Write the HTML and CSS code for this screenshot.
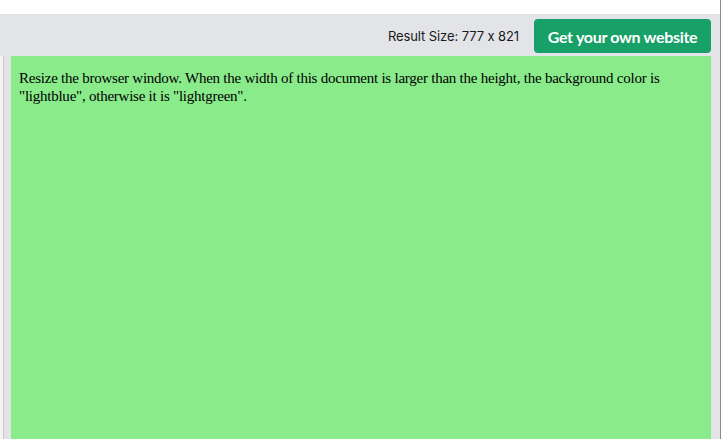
FILE: index.html
```html
<!DOCTYPE html>
<html>
<head>
<meta charset="utf-8">
<link rel="stylesheet" href="styles.css">
</head>
<body>
<div class="page">
  <div class="topbar"></div>
  <div class="main">
    <div class="header">
      <span class="result-size">Result Size: 777 x 821</span>
      <a class="cta">Get your own website</a>
    </div>
    <div class="content">
      <div class="edge"></div>
      <div class="frame">
        <p class="demo-text">Resize the browser window. When the width of this document is larger than the height, the background color is "lightblue", otherwise it is "lightgreen".</p>
      </div>
    </div>
  </div>
</div>
</body>
</html>
```
FILE: styles.css
```css
html, body {
  margin: 0;
  padding: 0;
  background: #ffffff;
}
.page {
  width: 720px;
  height: 439px;
  display: flex;
  flex-direction: column;
  border-right: 1px solid #8a8a8a;
  overflow: hidden;
}
.topbar {
  height: 14px;
  flex: none;
  background: #ffffff;
}
.main {
  flex: 1;
  background: #e3e4e8;
  display: flex;
  flex-direction: column;
  min-height: 0;
}
.header {
  flex: none;
  display: flex;
  justify-content: flex-end;
  align-items: center;
  padding: 5px 9px 3px 0;
  gap: 15px;
}
.result-size {
  font-family: Inter, "Open Sans", sans-serif;
  font-size: 13px;
  color: #1a1a1a;
  font-feature-settings: "calt" 0;
  letter-spacing: -0.1px;
}
.cta {
  display: flex;
  align-items: center;
  justify-content: center;
  height: 34px;
  width: 177px;
  box-sizing: border-box;
  border-radius: 4px;
  background: #17a067;
  color: #ffffff;
  font-family: Lato, "Noto Sans", sans-serif;
  font-weight: 700;
  font-size: 16px;
  letter-spacing: -0.3px;
}
.content {
  flex: 1;
  display: flex;
  min-height: 0;
}
.edge {
  width: 3px;
  flex: none;
  background: #f4f4f5;
  border-right: 1px solid #c9c9cc;
  margin-right: 7px;
}
.frame {
  width: 700px;
  flex: none;
  background: #8aeb8b;
  padding: 13px 8px 0 8px;
  box-sizing: border-box;
}
.demo-text {
  margin: 0;
  font-family: "Liberation Serif", "Times New Roman", serif;
  font-size: 15px;
  line-height: 18px;
  letter-spacing: -0.24px;
  color: #000000;
}
```
